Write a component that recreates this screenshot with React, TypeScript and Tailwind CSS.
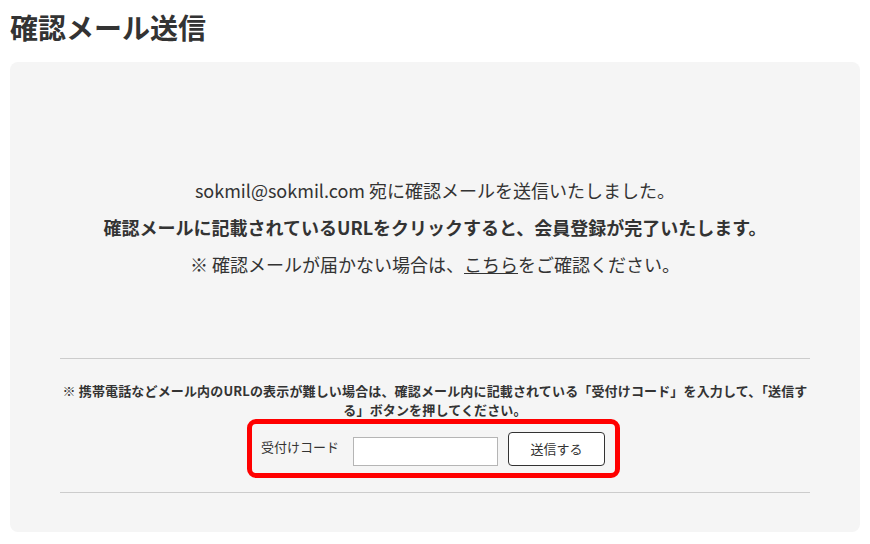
import React from "react";

export default function App() {
  const font = { fontFamily: '"Noto Sans CJK JP", "Noto Sans", sans-serif' };
  return (
    <div className="w-[870px] h-[544px] bg-white text-[#333]" style={font}>
      <h1 className="px-[10px] pt-[7px] text-[28px] leading-[40px] font-bold text-[#333]">確認メール送信</h1>
      <div className="mx-[10px] mt-[15px] h-[470px] w-[850px] rounded-[8px] bg-[#f5f5f5] pt-[110px]">
        <div className="text-center text-[18px] leading-[37px]">
          <p>sokmil@sokmil.com 宛に確認メールを送信いたしました。</p>
          <p className="font-bold">確認メールに記載されているURLをクリックすると、会員登録が完了いたします。</p>
          <p>
            ※ 確認メールが届かない場合は、<a className="underline">こちら</a>をご確認ください。
          </p>
        </div>
        <div className="mx-[50px] mt-[75px] border-t border-[#cccccc]">
          <p className="mt-[22px] text-center text-[13px] leading-[19px] font-bold tracking-[0.15px]">
            ※ 携帯電話などメール内のURLの表示が難しい場合は、確認メール内に記載されている「受付けコード」を入力して、「送信する」ボタンを押してください。
          </p>
          <div className="ml-[187px] flex h-[59px] w-[373px] items-start rounded-[9px] border-[5px] border-[#ff0000] pl-[9px] pt-[8px]">
            <span className="mt-[5px] text-[13px] leading-[19px] text-[#333]">受付けコード</span>
            <input
              type="text"
              className="ml-[14px] mt-[5px] h-[29px] w-[145px] border border-[#b5b5b5] bg-white outline-none"
            />
            <button className="ml-[10px] h-[34px] w-[97px] rounded-[4px] border border-[#333] bg-white text-[13px] text-[#333]">
              送信する
            </button>
          </div>
          <div className="mt-[14px] border-t border-[#cccccc]" />
        </div>
      </div>
    </div>
  );
}
